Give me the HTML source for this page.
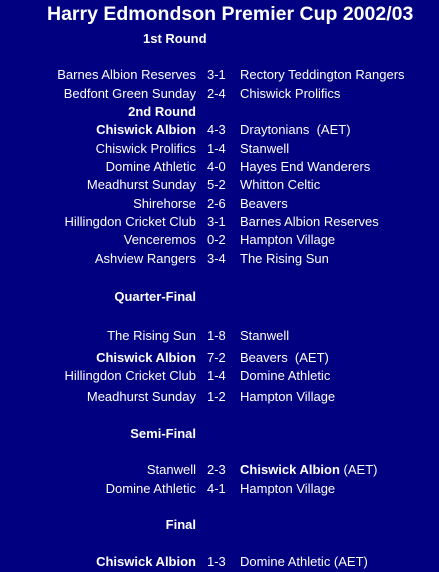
<!DOCTYPE html>
<html><head><style>
body{margin:0;width:439px;height:572px;background:#000080;color:#fff;font-family:"Liberation Sans",Arial,sans-serif;font-size:13px;position:relative;overflow:hidden}
.r{position:absolute;height:16px;line-height:16px;white-space:nowrap}
.l{right:243px;text-align:right}
.s{left:207px}
.t{left:240px}
b{font-weight:bold}
</style></head><body>
<div class="r" style="left:47px;top:3px;height:22px;line-height:22px;font-size:19.5px;font-weight:bold">Harry Edmondson Premier Cup 2002/03</div>
<div class="r" style="left:143px;top:31px;font-weight:bold">1st Round</div>

<div class="r l" style="top:67px">Barnes Albion Reserves</div><div class="r s" style="top:67px">3-1</div><div class="r t" style="top:67px">Rectory Teddington Rangers</div>
<div class="r l" style="top:86px">Bedfont Green Sunday</div><div class="r s" style="top:86px">2-4</div><div class="r t" style="top:86px">Chiswick Prolifics</div>
<div class="r l" style="top:104px"><b>2nd Round</b></div>
<div class="r l" style="top:122px"><b>Chiswick Albion</b></div><div class="r s" style="top:122px">4-3</div><div class="r t" style="top:122px">Draytonians&nbsp; (AET)</div>
<div class="r l" style="top:141px">Chiswick Prolifics</div><div class="r s" style="top:141px">1-4</div><div class="r t" style="top:141px">Stanwell</div>
<div class="r l" style="top:159px">Domine Athletic</div><div class="r s" style="top:159px">4-0</div><div class="r t" style="top:159px">Hayes End Wanderers</div>
<div class="r l" style="top:177px">Meadhurst Sunday</div><div class="r s" style="top:177px">5-2</div><div class="r t" style="top:177px">Whitton Celtic</div>
<div class="r l" style="top:196px">Shirehorse</div><div class="r s" style="top:196px">2-6</div><div class="r t" style="top:196px">Beavers</div>
<div class="r l" style="top:214px">Hillingdon Cricket Club</div><div class="r s" style="top:214px">3-1</div><div class="r t" style="top:214px">Barnes Albion Reserves</div>
<div class="r l" style="top:232px">Venceremos</div><div class="r s" style="top:232px">0-2</div><div class="r t" style="top:232px">Hampton Village</div>
<div class="r l" style="top:251px">Ashview Rangers</div><div class="r s" style="top:251px">3-4</div><div class="r t" style="top:251px">The Rising Sun</div>

<div class="r l" style="top:289px"><b>Quarter-Final</b></div>
<div class="r l" style="top:328px">The Rising Sun</div><div class="r s" style="top:328px">1-8</div><div class="r t" style="top:328px">Stanwell</div>
<div class="r l" style="top:350px"><b>Chiswick Albion</b></div><div class="r s" style="top:350px">7-2</div><div class="r t" style="top:350px">Beavers&nbsp; (AET)</div>
<div class="r l" style="top:368px">Hillingdon Cricket Club</div><div class="r s" style="top:368px">1-4</div><div class="r t" style="top:368px">Domine Athletic</div>
<div class="r l" style="top:389px">Meadhurst Sunday</div><div class="r s" style="top:389px">1-2</div><div class="r t" style="top:389px">Hampton Village</div>

<div class="r l" style="top:426px"><b>Semi-Final</b></div>
<div class="r l" style="top:462px">Stanwell</div><div class="r s" style="top:462px">2-3</div><div class="r t" style="top:462px"><b>Chiswick Albion</b> (AET)</div>
<div class="r l" style="top:481px">Domine Athletic</div><div class="r s" style="top:481px">4-1</div><div class="r t" style="top:481px">Hampton Village</div>

<div class="r l" style="top:517px"><b>Final</b></div>
<div class="r l" style="top:554px"><b>Chiswick Albion</b></div><div class="r s" style="top:554px">1-3</div><div class="r t" style="top:554px">Domine Athletic (AET)</div>
</body></html>
